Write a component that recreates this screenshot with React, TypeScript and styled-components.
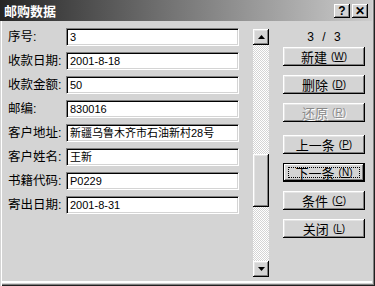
import React from "react";
import styled, { createGlobalStyle } from "styled-components";

const GlobalStyle = createGlobalStyle`
  html, body { margin: 0; padding: 0; background: #d4d4d4; }
  * { box-sizing: border-box; }
`;

const FONT = `"Liberation Sans", "Noto Sans CJK SC", sans-serif`;

const Window = styled.div`
  width: 375px;
  height: 286px;
  background: #d4d4d4;
  font-family: ${FONT};
  color: #000;
  display: flex;
  flex-direction: column;
  box-shadow: inset 1px 0 #d4d4d4, inset 2px 0 #ffffff, inset -1px -1px #202020,
    inset -2px -2px #808080, inset -3px -3px #d4d4d4, inset 0 -5px #ffffff;
  overflow: hidden;
`;

const TitleBar = styled.div`
  height: 21px;
  margin-right: 3px;
  display: flex;
  align-items: center;
  padding: 0 4px 0 4px;
  background: linear-gradient(90deg, #262626 0%, #6a6a6a 40%, #cdcdcd 100%);
`;

const Title = styled.div`
  flex: 1;
  color: #fff;
  font-weight: bold;
  font-size: 13px;
`;

const CaptionButton = styled.div<{ $ml?: number }>`
  width: 16px;
  height: 14px;
  margin-left: ${(p) => p.$ml ?? 0}px;
  background: #d4d4d4;
  box-shadow: inset -1px -1px #000, inset 1px 1px #fff, inset -2px -2px #808080;
  display: flex;
  align-items: center;
  justify-content: center;
  font-weight: bold;
  font-size: 12px;
  line-height: 1;
`;

const Body = styled.div`
  display: flex;
  padding: 7px 0 0 8px;
`;

const Form = styled.div`
  display: grid;
  grid-template-columns: 58px 173px;
  grid-auto-rows: 18px;
  row-gap: 6px;
`;

const Label = styled.div`
  font-size: 12.5px;
  line-height: 18px;
  white-space: nowrap;
`;

const Field = styled.div`
  background: #fff;
  border: 1px solid;
  border-color: #808080 #ffffff #ffffff #808080;
  box-shadow: inset 1px 1px #000, inset -1px -1px #d4d4d4;
  padding: 0 3px;
  font-size: 11px;
  line-height: 16px;
  white-space: nowrap;
  overflow: hidden;
`;

const ScrollBar = styled.div`
  width: 16px;
  height: 248px;
  margin: 1px 0 0 14px;
  display: flex;
  flex-direction: column;
`;

const Raised = styled.div`
  background: #d4d4d4;
  box-shadow: inset -1px -1px #000, inset 1px 1px #fff, inset -2px -2px #808080,
    inset 2px 2px #e4e4e4;
`;

const ArrowButton = styled(Raised)`
  height: 16px;
  flex: none;
  display: flex;
  align-items: center;
  justify-content: center;
`;

const Track = styled.div`
  flex: 1;
  display: flex;
  flex-direction: column;
  background: repeating-conic-gradient(#ffffff 0 25%, #d4d4d4 0 50%) 0 0 / 2px 2px;
`;

const Thumb = styled(Raised)`
  height: 53px;
  flex: none;
`;

const Side = styled.div`
  width: 82px;
  margin-left: 14px;
  display: flex;
  flex-direction: column;
`;

const Counter = styled.div`
  height: 19px;
  font-size: 12px;
  line-height: 18px;
  text-align: center;
  word-spacing: 5px;
`;

const Button = styled.div<{ $gap: number; $disabled?: boolean; $default?: boolean }>`
  position: relative;
  height: 19px;
  margin-top: ${(p) => p.$gap}px;
  background: #d4d4d4;
  box-shadow: ${(p) =>
    p.$default
      ? "inset 0 0 0 1px #000, inset -2px -2px #000, inset 2px 2px #fff, inset -3px -3px #808080"
      : "inset -1px -1px #000, inset 1px 1px #fff, inset -2px -2px #808080, inset 2px 2px #e4e4e4"};
  display: flex;
  align-items: center;
  justify-content: center;
  font-size: 13px;
  color: ${(p) => (p.$disabled ? "#8a8a8a" : "#000")};
  text-shadow: ${(p) => (p.$disabled ? "1px 1px #fff" : "none")};
  white-space: nowrap;
`;

const Focus = styled.div`
  position: absolute;
  inset: 4px 5px 4px 5px;
  border: 1px dotted #000;
  pointer-events: none;
`;

const Mnemonic = styled.span`
  font-size: 10px;
  margin-left: 4px;
  u { text-decoration: underline; text-underline-offset: 1px; }
`;

const Tri = ({ up }: { up?: boolean }) => (
  <svg width="7" height="4" viewBox="0 0 7 4">
    <polygon points={up ? "0,4 7,4 3.5,0" : "0,0 7,0 3.5,4"} fill="#000" />
  </svg>
);

const fields: [string, string][] = [
  ["序号:", "3"],
  ["收款日期:", "2001-8-18"],
  ["收款金额:", "50"],
  ["邮编:", "830016"],
  ["客户地址:", "新疆乌鲁木齐市石油新村28号"],
  ["客户姓名:", "王新"],
  ["书籍代码:", "P0229"],
  ["寄出日期:", "2001-8-31"],
];

const buttons: { text: string; key: string; gap: number; disabled?: boolean; def?: boolean }[] = [
  { text: "新建", key: "W", gap: 0 },
  { text: "删除", key: "D", gap: 9 },
  { text: "还原", key: "R", gap: 9, disabled: true },
  { text: "上一条", key: "P", gap: 13 },
  { text: "下一条", key: "N", gap: 9, def: true },
  { text: "条件", key: "C", gap: 9 },
  { text: "关闭", key: "L", gap: 9 },
];

const record = 3;
const total = 3;
const trackHeight = 248 - 32;
const thumbH = 53;

export default function App() {
  const thumbTop = Math.round(((trackHeight - thumbH) * (record - 1)) / total);
  return (
    <>
      <GlobalStyle />
      <Window>
        <TitleBar>
          <Title>邮购数据</Title>
          <CaptionButton>?</CaptionButton>
          <CaptionButton $ml={2}>✕</CaptionButton>
        </TitleBar>
        <Body>
          <Form>
            {fields.map(([l, v]) => (
              <React.Fragment key={l}>
                <Label>{l}</Label>
                <Field>{v}</Field>
              </React.Fragment>
            ))}
          </Form>
          <ScrollBar>
            <ArrowButton>
              <Tri up />
            </ArrowButton>
            <Track>
              <Thumb style={{ marginTop: thumbTop }} />
            </Track>
            <ArrowButton>
              <Tri />
            </ArrowButton>
          </ScrollBar>
          <Side>
            <Counter>
              {record} / {total}
            </Counter>
            {buttons.map((b) => (
              <Button key={b.key} $gap={b.gap} $disabled={b.disabled} $default={b.def}>
                {b.text}
                <Mnemonic>
                  (<u>{b.key}</u>)
                </Mnemonic>
                {b.def && <Focus />}
              </Button>
            ))}
          </Side>
        </Body>
      </Window>
    </>
  );
}
